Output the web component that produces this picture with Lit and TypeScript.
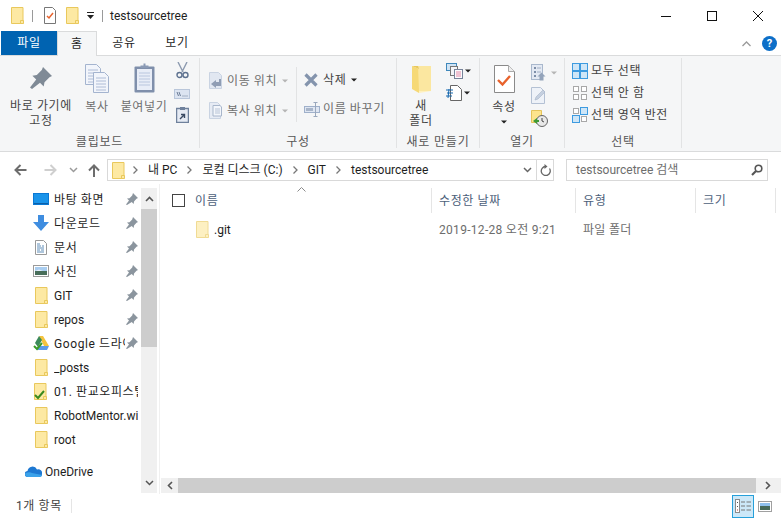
import { LitElement, html, css, svg } from 'lit'
import { customElement } from 'lit/decorators.js'
import { classMap } from 'lit/directives/class-map.js'

const icon = (w: number, h: number, body: unknown) =>
	html`<svg class="ic" width=${w} height=${h} viewBox="0 0 ${w} ${h}">${body}</svg>`

const folderBody = (o = 1) => svg`<g opacity=${o}>
	<path d="M.5.5h11.500v16H.5z" fill="#fde9a3" stroke="#e9c85c"/>
	<path d="M9.500 13.500h3v3h-3z" fill="#fde9a3" stroke="#e9c85c"/>
</g>`
const folder = (o = 1) => icon(13, 17, folderBody(o))

const pinSmall = icon(12, 12, svg`<path d="M7 0l5 5-1.500.800-2.500 2.700-.300 2.500-2-2L1 12l-1-.500 3-4-2-2 2.500-.300L6.200 2.500z" fill="#8b959e"/>`)
const chevronDown = (c = '#666') => icon(9, 6, svg`<path d="M1 1l3.500 3.500L8 1" fill="none" stroke=${c} stroke-width="1.500"/>`)
const caret = (c = '#222') => icon(6, 4, svg`<path d="M0 .5h6L3 3.500z" fill=${c}/>`)
const crumb = icon(5, 8, svg`<path d="M.5.500L4 4 .5 7.500" fill="none" stroke="#777" stroke-width="1.300"/>`)

const pinBig = icon(22, 22, svg`<path d="M13 0l9 9-2.500 1.200-5 5-.800 4.300-3.700-3.700L2 22l-2-1.500 6.200-7.900-3.800-3.800 4.400-.700 5-5z" fill="#7f8a96"/>`)
const doc = (x: number, y: number) => svg`<g transform="translate(${x} ${y})">
	<path d="M.5.5h11l4 4v16H.5z" fill="#f2f5fb" stroke="#a4b4cf"/>
	<path d="M3 6h10M3 9h10M3 12h10M3 15h10M3 18h10" stroke="#aebcd6"/>
</g>`
const copyBig = icon(25, 29, svg`${doc(0, 0)}${doc(8, 8)}`)
const pasteBig = icon(21, 30, svg`<rect x=".5" y="3.500" width="20" height="26" rx="1" fill="#7f8fab"/>
	<rect x="3" y="6" width="15" height="21" fill="#e8edf7"/>
	<path d="M5 10h11M5 13h11M5 16h11M5 19h11M5 22h11" stroke="#b9c6de"/>
	<path d="M6.500 5V2.500h3V.5h2v2h3V5z" fill="#8a9ab5"/>`)
const scissors = icon(13, 17, svg`<path d="M2 0l5 10M11 0L6 10" stroke="#8c9ab0" stroke-width="1.400"/>
	<circle cx="3.500" cy="13" r="2.500" fill="none" stroke="#5d718f" stroke-width="1.400"/>
	<circle cx="9.500" cy="13" r="2.500" fill="none" stroke="#5d718f" stroke-width="1.400"/>`)
const copyPath = icon(16, 10, svg`<rect x=".5" y=".5" width="15" height="9" fill="#dce4f1" stroke="#b9c6da"/>
	<path d="M3 3l1.500 4M5 3l1.500 4" stroke="#6b7c96"/><path d="M8.500 7h1M10.500 7h1M12.500 7h1" stroke="#6b7c96"/>`)
const pasteShortcut = icon(13, 16, svg`<rect x=".5" y="1.500" width="12" height="14" fill="#e6ebf4" stroke="#6f819c" stroke-width="1.500"/>
	<path d="M4 0h5v3H4z" fill="#6f819c"/><path d="M4 12l4-4M5 7.500h3.500V11" fill="none" stroke="#3a4a63" stroke-width="1.400"/>`)
const moveTo = icon(13, 17, svg`<path d="M.5.5h9l3 3v13H.5z" fill="#e1e7f1" stroke="#c9d3e2"/>
	<path d="M12 7v7H7v2L2 12l5-4v2h3V7z" fill="#8f9db4"/>`)
const copyTo = icon(13, 17, svg`<path d="M.5.5h8l3 3v13H.5z" fill="#e6ebf4" stroke="#c9d3e2"/>
	<path d="M4 3.500h7l1.500 1.500v9H4z" fill="#f3f6fb" stroke="#a8b6cb"/>
	<path d="M6 7h5M6 9h5M6 11h5" stroke="#b7c3d6"/>`)
const deleteX = icon(14, 14, svg`<path d="M1.500 1.500l11 11M12.500 1.500l-11 11" stroke="#8494ad" stroke-width="3.200"/>`)
const rename = icon(16, 15, svg`<rect x=".5" y="4.500" width="15" height="6" fill="#dfe6f2" stroke="#9fb0ca"/>
	<rect x="2" y="6" width="7" height="3" fill="#a8b5c9"/>
	<path d="M9.500.5h4M9.500 14.500h4M11.500.5v14" stroke="#9aa8bd"/>`)
const newFolderBig = icon(19, 28, svg`<path d="M0 1l7 3v24L0 24z" fill="#f6d976"/>
	<path d="M6 1h13v25H7z" fill="#fbe7a0"/><path d="M7 4l-7-3h6z" fill="#e9c85c"/><path d="M7 28l12-2H7z" fill="#fff1bf"/>`)
const newItem = icon(17, 16, svg`<rect x=".5" y=".5" width="10" height="7" fill="#cfe3f4" stroke="#3f88bb"/>
	<rect x="4.500" y="3.500" width="7" height="9" fill="#f4f5f8" stroke="#777"/>
	<rect x="8.500" y="6.500" width="8" height="9" fill="#fbfbfd" stroke="#77839a"/>
	<path d="M10 9h5M10 11h5M10 13h5" stroke="#e58aa8"/>`)
const easyAccess = icon(16, 16, svg`<path d="M4.500.5h7l4 4v11h-11z" fill="#fff" stroke="#666"/>
	<path d="M0 5h7M1 8h6M0 11h6" stroke="#1668b0" stroke-width="1.200"/><path d="M3 4l-1 9" stroke="#1668b0"/>`)
const propsBig = icon(21, 28, svg`<path d="M.5.5h14l6 6v21H.5z" fill="#fff" stroke="#8a8a8a"/>
	<path d="M14.500.5v6h6" fill="#eee" stroke="#aaa"/>
	<path d="M4 15l4.500 4.500L16 11" fill="none" stroke="#e8622c" stroke-width="2.400"/>`)
const openIcon = icon(15, 17, svg`<rect x=".5" y=".5" width="11" height="15" fill="#e3e9f3" stroke="#a9b8cd"/>
	<path d="M3 3h2v2H3zM3 7h2v2H3zM3 11h2v2H3z" fill="#7d8ea8"/><path d="M6 4h4M6 8h4" stroke="#a0aec4"/>
	<path d="M10.500 8.500l4 4h-2v4h-4v-4h-2z" fill="#93a3ba"/>`)
const editIcon = icon(15, 17, svg`<path d="M.5.5h9l4 4v12H.5z" fill="#eef2f8" stroke="#b4c1d4"/>
	<path d="M4 13l1-3 7-7 2 2-7 7z" fill="#c5d0e0" stroke="#a6b4c8" stroke-width=".6"/>`)
const historyIcon = icon(17, 17, svg`<path d="M.5.5h10v12H.5z" fill="#fde48c" stroke="#e5c45a"/>
	<circle cx="11" cy="11" r="5.500" fill="#e8e8e8" stroke="#666"/>
	<path d="M11 8v3l2 1" fill="none" stroke="#444"/><path d="M2 11l4-3v6z" fill="#3e9a35"/><path d="M5 11h3" stroke="#3e9a35" stroke-width="2"/>`)
const grid = (colors: string[]) => icon(16, 16, svg`${colors.map((c, i) => {
	const x = i % 2 ? 9 : 1
	const y = i < 2 ? 1 : 9
	return c === 'off'
		? svg`<rect x=${x + .5} y=${y + .5} width="5" height="5" fill="#fff" stroke="#a8a8a8"/>`
		: svg`<rect x=${x - .5} y=${y - .5} width="7" height="7" fill="#cfe6f7" stroke="#3d9be0"/>`
})}`)

const arrowLeft = (c: string) => icon(13, 12, svg`<path d="M12.500 6H2M6.500 1L1.500 6l5 5" fill="none" stroke=${c} stroke-width="2"/>`)
const arrowRight = (c: string) => icon(13, 12, svg`<path d="M.5 6H11M6.500 1l5 5-5 5" fill="none" stroke=${c} stroke-width="2"/>`)
const arrowUp = icon(12, 13, svg`<path d="M6 13V2M1 6.500l5-5 5 5" fill="none" stroke="#6d6d6d" stroke-width="2"/>`)
const refresh = icon(11, 12, svg`<path d="M9.500 3.500A4.500 4.500 0 1 1 5.500 1.500" fill="none" stroke="#666" stroke-width="1.300" transform="translate(0 1)"/><path d="M4.500 0l3 2.500-3 2.500z" fill="#666"/>`)
const search = icon(12, 12, svg`<circle cx="7.500" cy="4.500" r="3.300" fill="none" stroke="#555" stroke-width="1.600"/><path d="M5 7l-4 4" stroke="#555" stroke-width="2.200"/>`)

const desktop = icon(16, 12, svg`<rect width="16" height="12" fill="#0a78d4"/><rect x="1" y="1" width="14" height="9" fill="#1a94ea"/><path d="M1 10h14v1H1z" fill="#0c5fa8"/>`)
const download = icon(16, 16, svg`<path d="M5 0h6v7h5l-8 9-8-9h5z" fill="#3f8de0"/>`)
const documentIcon = icon(12, 15, svg`<path d="M.5.5h8l3 3v11H.5z" fill="#fff" stroke="#999"/>
	<path d="M2 4h3M2 6h4M7 6h2M2 8h7M2 10h3M6 10h3M2 12h7" stroke="#5f8db8"/>`)
const pictures = icon(16, 12, svg`<rect x=".5" y=".5" width="15" height="11" fill="#fff" stroke="#9a9a9a"/>
	<rect x="2" y="2" width="12" height="4" fill="#a9cdf0"/><rect x="2" y="6" width="12" height="4" fill="#486e5a"/>
	<path d="M2 6l4-1.500L10 6z" fill="#e6f0f8"/>`)
const drive = icon(16, 15, svg`<path d="M6 0h4l6 10h-5z" fill="#f3c33e"/><path d="M6 0L2 7l3 4 4-7z" fill="#3c8a5a"/><path d="M6 10h10l-2 4H4z" fill="#5b9be8"/>
	<path d="M1 10l3 3 5-6" fill="none" stroke="#3a9a28" stroke-width="2"/>`)
const syncedFolder = icon(15, 17, svg`${folderBody()}<path d="M1 12l3 3 6-7" fill="none" stroke="#3a8a1e" stroke-width="2"/>`)
const oneDrive = icon(17, 11, svg`<path d="M3 11a3 3 0 0 1-.5-6A5 5 0 0 1 12 3.500 3.800 3.800 0 0 1 17 8a3 3 0 0 1-3 3z" fill="#1d78d2"/><path d="M3 11c-1.500 0-3-1.200-3-3 0-1 4-2.500 7-1l10 2c0 1-1 2-3 2z" fill="#3ba2ea"/>`)
const detailsView = icon(16, 14, svg`<rect x=".5" y=".5" width="4" height="13" fill="#fff" stroke="#8a8a8a"/>
	<path d="M2 3h1v1H2zM2 7h1v1H2z" fill="#555"/><path d="M2 10.500h1v1H2z" fill="#c0392b"/>
	<path d="M6 3h4M11.500 3H16M6 7h4M11.500 7H16M6 11h4M11.500 11H16" stroke="#777"/>`)
const tilesView = icon(14, 11, svg`<rect x=".5" y=".5" width="13" height="10" fill="#fff" stroke="#a0a0a0"/>
	<rect x="2" y="2" width="10" height="3" fill="#8fc0ee"/><rect x="2" y="5" width="10" height="4" fill="#46695a"/>`)

type NavItem = { icon: unknown; label: string; pin?: boolean }

const navItems: NavItem[] = [
	{ icon: desktop, label: '바탕 화면', pin: true },
	{ icon: download, label: '다운로드', pin: true },
	{ icon: documentIcon, label: '문서', pin: true },
	{ icon: pictures, label: '사진', pin: true },
	{ icon: folder(), label: 'GIT', pin: true },
	{ icon: folder(), label: 'repos', pin: true },
	{ icon: drive, label: 'Google 드라이브', pin: true },
	{ icon: folder(), label: '_posts' },
	{ icon: syncedFolder, label: '01. 판교오피스텔' },
	{ icon: folder(), label: 'RobotMentor.wiki' },
	{ icon: folder(), label: 'root' },
]

@customElement('app-root')
export class AppRoot extends LitElement {
	static styles = css`
		:host {
			display: block;
			width: 781px;
			height: 518px;
			overflow: hidden;
			background: #fff;
			color: #1e1e1e;
			font: 12px/16px Roboto, 'Noto Sans CJK KR', sans-serif;
		}
		.ic {
			display: block;
			flex: none;
		}
		.title {
			display: flex;
			align-items: center;
			height: 31px;
			padding-left: 11px;
		}
		.title-sep {
			width: 1px;
			height: 12px;
			margin: 0 7px 0 8px;
			background: #9a9a9a;
		}
		.title-sep--first {
			margin-right: 11px;
		}
		.title-gap {
			width: 10px;
		}
		.title-gap--small {
			width: 8px;
		}
		.title-name {
			flex: 1;
		}
		.win {
			display: flex;
		}
		.win-btn {
			display: flex;
			align-items: center;
			justify-content: center;
			width: 46px;
			height: 31px;
		}
		.tabs {
			display: flex;
			height: 25px;
			padding-left: 1px;
			margin-bottom: -1px;
		}
		.tab {
			display: flex;
			align-items: center;
			justify-content: center;
			width: 40px;
			height: 24px;
			letter-spacing: 0.8px;
		}
		.tab--file {
			width: 56px;
			background: #0063b1;
			color: #fff;
		}
		.tab--active {
			height: 25px;
			background: #f5f6f7;
			border: 1px solid #dadbdc;
			border-bottom: none;
			box-sizing: border-box;
			position: relative;
			z-index: 1;
		}
		.tab--share {
			margin-left: 7px;
		}
		.tab--view {
			margin-left: 13px;
		}
		.tab-right {
			display: flex;
			align-items: center;
			margin-left: auto;
			gap: 11px;
			padding-right: 4px;
		}
		.help {
			display: flex;
			align-items: center;
			justify-content: center;
			width: 15px;
			height: 15px;
			border-radius: 50%;
			background: #0d6fc8;
			color: #fff;
			font-weight: 700;
			font-size: 11px;
		}
		.ribbon {
			display: flex;
			height: 97px;
			background: #f5f6f7;
			border-top: 1px solid #dadbdc;
			border-bottom: 1px solid #dadbdc;
			box-sizing: border-box;
			padding-top: 2px;
			color: #444;
		}
		.group {
			display: flex;
			flex-direction: column;
			height: 90px;
			border-right: 1px solid #e2e3e4;
			box-sizing: border-box;
		}
		.group--clip {
			width: 200px;
		}
		.group--org {
			width: 197px;
		}
		.group--new {
			width: 83px;
		}
		.group--open {
			width: 85px;
		}
		.group--select {
			width: 117px;
		}
		.group-body {
			display: flex;
			height: 71px;
		}
		.group-label {
			text-align: center;
			height: 19px;
			padding-top: 5px;
			box-sizing: border-box;
			letter-spacing: 0.8px;
			color: #555;
		}
		.big {
			display: flex;
			flex-direction: column;
			align-items: center;
			text-align: center;
			letter-spacing: 0.6px;
			line-height: 15px;
		}
		.big-icon {
			display: flex;
			align-items: flex-end;
			justify-content: center;
			height: 35px;
			margin-bottom: 7px;
		}
		.big-icon--pin {
			height: 32px;
			margin-bottom: 10px;
		}
		.big-icon--folder {
			height: 36px;
			margin-bottom: 6px;
		}
		.big--pin {
			width: 82px;
		}
		.big--copy {
			width: 30px;
		}
		.big--paste {
			width: 64px;
		}
		.big--new {
			width: 44px;
			margin-left: 2px;
		}
		.big--props {
			width: 48px;
		}
		.big-caret {
			margin-top: 5px;
		}
		.muted {
			color: #6e6e6e;
		}
		.stack {
			display: flex;
			flex-direction: column;
			align-items: flex-start;
		}
		.stack--clip {
			align-items: center;
			width: 12px;
			margin-top: 4px;
		}
		.clip-scissors {
			margin-bottom: 10px;
		}
		.clip-path {
			margin-bottom: 8px;
		}
		.stack--move {
			width: 87px;
			padding: 14px 0 0 9px;
			gap: 13px;
		}
		.stack--edit {
			padding: 14px 0 0 7px;
			gap: 13px;
		}
		.stack--new {
			margin: 5px 0 0 3px;
			gap: 6px;
		}
		.stack--tools {
			margin: 6px 0 0 3px;
			gap: 6px;
		}
		.stack--select {
			padding: 5px 0 0 7px;
			gap: 6px;
		}
		.line {
			display: flex;
			align-items: center;
			gap: 5px;
			white-space: nowrap;
			letter-spacing: 0.6px;
		}
		.line--tight {
			gap: 3px;
		}
		.line--icons {
			gap: 2px;
		}
		.text-strong {
			color: #444;
		}
		.vsep {
			width: 1px;
			height: 55px;
			margin-top: 9px;
			background: #e2e3e4;
		}
		.addr {
			display: flex;
			align-items: center;
			height: 32px;
			padding: 7px 0 3px 14px;
			box-sizing: border-box;
		}
		.addr-back {
			margin-right: 17px;
		}
		.addr-forward {
			margin-right: 12px;
		}
		.addr-recent {
			margin-right: 10px;
		}
		.addr-box {
			display: flex;
			align-items: center;
			width: 447px;
			height: 22px;
			margin-left: 7px;
			padding-left: 4px;
			border: 1px solid #d9d9d9;
			box-sizing: border-box;
		}
		.crumbs {
			display: flex;
			align-items: center;
			flex: 1;
			gap: 10px;
			margin-left: 8px;
			white-space: nowrap;
		}
		.addr-chevron {
			margin-right: 4px;
		}
		.addr-end {
			display: flex;
			align-items: center;
			justify-content: center;
			width: 16px;
			height: 20px;
			border-left: 1px solid #d9d9d9;
		}
		.search {
			display: flex;
			align-items: center;
			justify-content: space-between;
			width: 202px;
			height: 22px;
			margin-left: 12px;
			padding: 0 4px 0 9px;
			border: 1px solid #d9d9d9;
			box-sizing: border-box;
			color: #6d6d6d;
		}
		.main {
			display: flex;
			height: 310px;
		}
		.nav {
			width: 141px;
			padding-top: 3px;
			overflow: hidden;
		}
		.nav-row {
			display: flex;
			align-items: center;
			height: 24px;
			padding: 0 3px 0 33px;
			box-sizing: border-box;
		}
		.nav-icon {
			display: flex;
			justify-content: center;
			width: 16px;
			margin-right: 5px;
		}
		.nav-label {
			flex: 1;
			min-width: 0;
			padding-top: 2px;
			overflow: hidden;
			white-space: nowrap;
		}
		.nav-label--ko {
			letter-spacing: 0.6px;
		}
		.nav-pin {
			margin-left: 1px;
		}
		.nav-gap {
			height: 8px;
		}
		.nav-row--drive {
			padding-left: 25px;
		}
		.nav-icon--drive {
			margin-right: 4px;
		}
		.vbar {
			display: flex;
			flex-direction: column;
			width: 16px;
			height: 305px;
			margin-top: 4px;
			background: #f0f0f0;
		}
		.vbar-btn {
			display: flex;
			align-items: center;
			justify-content: center;
			height: 21px;
		}
		.vbar-thumb {
			height: 138px;
			background: #cdcdcd;
		}
		.vbar-track {
			flex: 1;
		}
		.files {
			display: flex;
			flex-direction: column;
			flex: 1;
			margin-left: 2px;
			padding-left: 1px;
			padding-top: 4px;
			border-left: 1px solid #f0f0f0;
			position: relative;
		}
		.head,
		.row {
			display: grid;
			grid-template-columns: 271px 144px 120px 80px;
		}
		.head {
			height: 25px;
			color: #4c607a;
			letter-spacing: 0.6px;
		}
		.head-cell {
			display: flex;
			align-items: center;
			padding-left: 7px;
			border-right: 1px solid #e5e5e5;
			box-sizing: border-box;
			position: relative;
		}
		.head-name {
			padding-left: 11px;
			gap: 10px;
		}
		.sort {
			position: absolute;
			left: 136px;
			top: -1px;
		}
		.check {
			width: 13px;
			height: 13px;
			border: 1px solid #444;
			box-sizing: border-box;
		}
		.row {
			height: 22px;
			margin-top: 5px;
			color: #6d6d6d;
			align-items: center;
		}
		.row-name {
			display: flex;
			align-items: center;
			gap: 5px;
			padding-left: 35px;
			color: #1e1e1e;
		}
		.row-name span {
			padding-top: 2px;
		}
		.row-cell {
			padding: 2px 0 0 7px;
			white-space: nowrap;
			letter-spacing: 0.3px;
		}
		.spacer {
			flex: 1;
		}
		.hbar {
			display: flex;
			height: 15px;
			margin-bottom: 1px;
			background: #f0f0f0;
		}
		.hbar-btn {
			display: flex;
			align-items: center;
			justify-content: center;
			width: 17px;
		}
		.hbar-btn--end {
			width: 24px;
		}
		.hbar-thumb {
			width: 578px;
			background: #cdcdcd;
		}
		.status {
			display: flex;
			align-items: center;
			height: 24px;
			padding-left: 16px;
			color: #444;
			letter-spacing: 0.6px;
		}
		.status-sep {
			width: 1px;
			height: 14px;
			margin-left: 9px;
			background: #e5e5e5;
		}
		.views {
			display: flex;
			align-items: center;
			margin-left: auto;
			padding-right: 5px;
		}
		.view {
			display: flex;
			align-items: center;
			justify-content: center;
			width: 22px;
			height: 23px;
			box-sizing: border-box;
		}
		.view--on {
			background: #cce8f8;
			border: 1px solid #26a0da;
		}
	`

	renderRibbon() {
		return html`<div class="ribbon">
			<div class="group group--clip">
				<div class="group-body">
					<div class="big big--pin"><div class="big-icon big-icon--pin">${pinBig}</div><span>바로 가기에<br />고정</span></div>
					<div class="big big--copy muted"><div class="big-icon">${copyBig}</div>복사</div>
					<div class="big big--paste muted"><div class="big-icon">${pasteBig}</div>붙여넣기</div>
					<div class="stack stack--clip">
						<div class="clip-scissors">${scissors}</div>
						<div class="clip-path">${copyPath}</div>
						${pasteShortcut}
					</div>
				</div>
				<div class="group-label">클립보드</div>
			</div>
			<div class="group group--org">
				<div class="group-body">
					<div class="stack stack--move muted">
						<div class="line">${moveTo}이동 위치 ${caret('#b5b5b5')}</div>
						<div class="line">${copyTo}복사 위치 ${caret('#b5b5b5')}</div>
					</div>
					<div class="vsep"></div>
					<div class="stack stack--edit">
						<div class="line">${deleteX}<span class="text-strong">삭제</span> ${caret()}</div>
						<div class="line line--tight muted">${rename}이름 바꾸기</div>
					</div>
				</div>
				<div class="group-label">구성</div>
			</div>
			<div class="group group--new">
				<div class="group-body">
					<div class="big big--new"><div class="big-icon big-icon--folder">${newFolderBig}</div><span>새<br />폴더</span></div>
					<div class="stack stack--new">
						<div class="line line--icons">${newItem}${caret()}</div>
						<div class="line line--icons">${easyAccess}${caret()}</div>
					</div>
				</div>
				<div class="group-label">새로 만들기</div>
			</div>
			<div class="group group--open">
				<div class="group-body">
					<div class="big big--props"><div class="big-icon">${propsBig}</div><span>속성</span><div class="big-caret">${caret()}</div></div>
					<div class="stack stack--tools">
						<div class="line">${openIcon}${caret('#b5b5b5')}</div>
						${editIcon}${historyIcon}
					</div>
				</div>
				<div class="group-label">열기</div>
			</div>
			<div class="group group--select">
				<div class="group-body">
					<div class="stack stack--select">
						<div class="line line--tight">${grid(['on', 'on', 'on', 'on'])}모두 선택</div>
						<div class="line line--tight">${grid(['off', 'off', 'off', 'off'])}선택 안 함</div>
						<div class="line line--tight">${grid(['off', 'on', 'on', 'off'])}선택 영역 반전</div>
					</div>
				</div>
				<div class="group-label">선택</div>
			</div>
		</div>`
	}

	renderNavRow(item: NavItem) {
		const labelClasses = {
			'nav-label': true,
			'nav-label--ko': /[가-힣]/.test(item.label),
		}
		return html`<div class="nav-row">
			<span class="nav-icon">${item.icon}</span>
			<span class=${classMap(labelClasses)}>${item.label}</span>
			${item.pin ? html`<span class="nav-pin">${pinSmall}</span>` : ''}
		</div>`
	}

	render() {
		return html`
			<div class="title">
				${folder()}
				<span class="title-sep title-sep--first"></span>
				${icon(12, 17, svg`<path d="M.5.5h8l3 3v13H.5z" fill="#fff" stroke="#777"/><path d="M3 9l2 2 4-5" fill="none" stroke="#e8622c" stroke-width="1.500"/>`)}
				<span class="title-gap"></span>
				${folder()}
				<span class="title-gap title-gap--small"></span>
				${icon(7, 7, svg`<path d="M0 .5h7" stroke="#222"/><path d="M0 3h7L3.500 7z" fill="#222"/>`)}
				<span class="title-sep"></span>
				<span class="title-name">testsourcetree</span>
				<div class="win">
					<div class="win-btn">${icon(10, 10, svg`<path d="M0 5.500h10" stroke="#111"/>`)}</div>
					<div class="win-btn">${icon(10, 10, svg`<rect x=".5" y=".5" width="9" height="9" fill="none" stroke="#111"/>`)}</div>
					<div class="win-btn">${icon(10, 10, svg`<path d="M0 0l10 10M10 0L0 10" stroke="#111"/>`)}</div>
				</div>
			</div>
			<div class="tabs">
				<div class="tab tab--file">파일</div>
				<div class="tab tab--active">홈</div>
				<div class="tab tab--share">공유</div>
				<div class="tab tab--view">보기</div>
				<div class="tab-right">
					${icon(9, 6, svg`<path d="M.5 5L4.500 1l4 4" fill="none" stroke="#9a9a9a" stroke-width="1.300"/>`)}
					<span class="help">?</span>
				</div>
			</div>
			${this.renderRibbon()}
			<div class="addr">
				<span class="addr-back">${arrowLeft('#6d6d6d')}</span>
				<span class="addr-forward">${arrowRight('#cfcfcf')}</span>
				<span class="addr-recent">${chevronDown('#9a9a9a')}</span>
				${arrowUp}
				<div class="addr-box">
					${folder()}
					<div class="crumbs">
						${crumb}<span>내 PC</span>${crumb}<span>로컬 디스크 (C:)</span>${crumb}<span>GIT</span>${crumb}<span>testsourcetree</span>
					</div>
					<span class="addr-chevron">${chevronDown()}</span>
					<div class="addr-end">${refresh}</div>
				</div>
				<div class="search"><span>testsourcetree 검색</span>${search}</div>
			</div>
			<div class="main">
				<div class="nav">
					${navItems.map((item) => this.renderNavRow(item))}
					<div class="nav-gap"></div>
					<div class="nav-row nav-row--drive"><span class="nav-icon nav-icon--drive">${oneDrive}</span><span class="nav-label">OneDrive</span></div>
				</div>
				<div class="vbar">
					<div class="vbar-btn">${icon(9, 6, svg`<path d="M1 5l3.500-3.500L8 5" fill="none" stroke="#555" stroke-width="1.600"/>`)}</div>
					<div class="vbar-thumb"></div>
					<div class="vbar-track"></div>
					<div class="vbar-btn">${chevronDown('#555')}</div>
				</div>
				<div class="files">
					<div class="head">
						<div class="head-cell head-name"><span class="check"></span>이름
							<span class="sort">${icon(9, 5, svg`<path d="M.5 4.500L4.500.5l4 4" fill="none" stroke="#8a8a8a"/>`)}</span>
						</div>
						<div class="head-cell">수정한 날짜</div>
						<div class="head-cell">유형</div>
						<div class="head-cell">크기</div>
					</div>
					<div class="row">
						<div class="row-name">${folder(0.65)}<span>.git</span></div>
						<div class="row-cell">2019-12-28 오전 9:21</div>
						<div class="row-cell">파일 폴더</div>
						<div></div>
					</div>
					<div class="spacer"></div>
					<div class="hbar">
						<div class="hbar-btn">${icon(6, 9, svg`<path d="M5 1L1.500 4.500 5 8" fill="none" stroke="#555" stroke-width="1.600"/>`)}</div>
						<div class="hbar-thumb"></div>
						<div class="hbar-btn hbar-btn--end">${icon(6, 9, svg`<path d="M1 1l3.500 3.500L1 8" fill="none" stroke="#555" stroke-width="1.600"/>`)}</div>
					</div>
				</div>
			</div>
			<div class="status">
				<span>1개 항목</span><span class="status-sep"></span>
				<div class="views">
					<div class="view view--on">${detailsView}</div>
					<div class="view">${tilesView}</div>
				</div>
			</div>
		`
	}
}
